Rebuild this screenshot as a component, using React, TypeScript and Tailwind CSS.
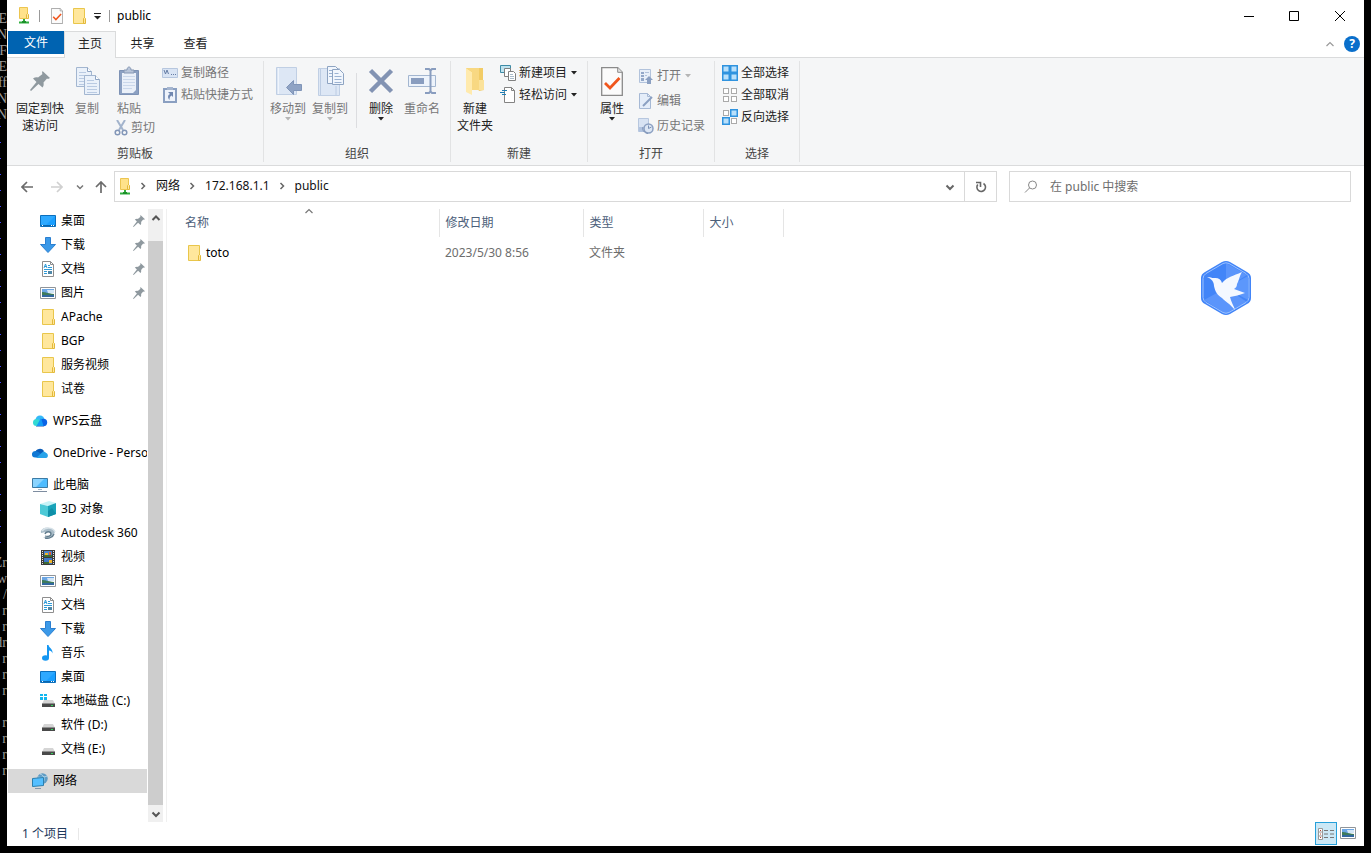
import type { ReactNode } from 'react';

function Svg({ w, h, children, className = '' }: { w: number; h: number; children: ReactNode; className?: string }) {
  return (
    <svg width={w} height={h} viewBox={`0 0 ${w} ${h}`} className={`shrink-0 ${className}`} aria-hidden="true">
      {children}
    </svg>
  );
}

/* ---------- small icons ---------- */

function FolderIcon() {
  return (
    <Svg w={16} h={16}>
      <path d="M2.500.500h11v15h-11z" fill="#ffe79c" stroke="#e9c64b" />
      <path d="M12.500 15.500v-5l1-1 1 1v5z" fill="#ffe79c" stroke="#e3b93a" />
    </Svg>
  );
}

function NetFolderIcon() {
  return (
    <Svg w={16} h={17}>
      <path d="M3.500.500h8v11h-8z" fill="#ffe28a" stroke="#ecc550" />
      <path d="M10.500 11.500v-4l1-1 1 1v4z" fill="#ffe9a8" stroke="#e3b93a" />
      <path d="M8 12v3" stroke="#2fae3c" strokeWidth="2" />
      <path d="M3 15.500h10" stroke="#2fae3c" strokeWidth="2" />
      <path d="M6 15h4" stroke="#1c8f2a" strokeWidth="2" />
    </Svg>
  );
}

function DesktopIcon() {
  return (
    <Svg w={16} h={16}>
      <path d="M.5 2.500h15v11H.5z" fill="#1a9fff" stroke="#0b6fbd" />
      <path d="M1 3h14L5 13H1z" fill="#3cb0ff" opacity=".6" />
      <path d="M1 12.500h14" stroke="#0a66ad" />
      <path d="M2 12.500h1M11 12.500h1M13 12.500h1" stroke="#fff" />
    </Svg>
  );
}

function DownloadIcon() {
  return (
    <Svg w={16} h={16}>
      <path d="M5.500.500h5v7h5l-7.500 8-7.500-8h5z" fill="#3b99e8" stroke="#2b7fd0" />
    </Svg>
  );
}

function DocumentIcon() {
  return (
    <Svg w={16} h={16}>
      <path d="M2.500.500h8l3 3v12h-11z" fill="#fff" stroke="#8e8e8e" />
      <path d="M10.500.500v3h3" fill="none" stroke="#8e8e8e" />
      <path d="M4 7l1.500-4L7 7M4.500 5.500h2M8 4.500h2M8 6.500h4M4 8.500h8M4 10.500h3M4 12.500h3" fill="none" stroke="#2f9bd8" />
      <path d="M8 10h4v3H8z" fill="#4f88a8" />
    </Svg>
  );
}

function PictureIcon() {
  return (
    <Svg w={16} h={16}>
      <path d="M.5 2.500h15v11H.5z" fill="#fff" stroke="#8f9499" />
      <path d="M2 4h12v4H2z" fill="#6ba6e4" />
      <path d="M7 5h7v3H8z" fill="#d3e6f7" />
      <path d="M2 7c3 0 5 1 12 2v1H2z" fill="#3d7a5d" />
      <path d="M2 10h12v2H2z" fill="#32689f" />
    </Svg>
  );
}

function WpsIcon() {
  return (
    <Svg w={16} h={16}>
      <circle cx="8" cy="7" r="4.500" fill="#35b8f8" />
      <circle cx="11.500" cy="9.500" r="3.700" fill="#0b63e5" />
      <circle cx="4.500" cy="9.500" r="3.500" fill="#32d9d4" />
      <path d="M4.500 13L9 5l2.500 8z" fill="#129af5" />
      <path d="M4 13.500h8" stroke="#91a9d5" />
    </Svg>
  );
}

function OneDriveIcon() {
  return (
    <Svg w={16} h={16}>
      <path d="M3 8a5 5 0 019-2l-3 5H2z" fill="#0a5cb8" />
      <path d="M3 12.500a3.200 3.200 0 01.3-6.400c2 0 3 1 6 3.400l-2 3z" fill="#1078d4" />
      <path d="M4 13l6-5.500c1-1 3-1.500 4 .5 2.500.5 2.500 5 0 5z" fill="#28a3ea" />
    </Svg>
  );
}

function ComputerIcon() {
  return (
    <Svg w={16} h={16}>
      <path d="M.5 1.500h15v9H.5z" fill="#4ebcff" stroke="#3c7ba5" />
      <path d="M1 2h11L4 10H1z" fill="#8ad4ff" />
      <path d="M6 12.500h4" stroke="#9db7c9" />
      <path d="M1 14.500h14" stroke="#7e8da0" />
    </Svg>
  );
}

function CubeIcon() {
  return (
    <Svg w={16} h={16}>
      <path d="M0 3l9-3 7 2-7 3z" fill="#c7f3f7" />
      <path d="M0 3l8 2v11l-8-3z" fill="#4cc9d6" />
      <path d="M8 5l8-3v11l-8 3z" fill="#17a3b9" />
      <path d="M8 10l4-3 4 6-8 3z" fill="#0f8fa8" />
    </Svg>
  );
}

function AutodeskIcon() {
  return (
    <Svg w={16} h={16}>
      <path d="M1 8c-1-4 4-6 8-5 5 0 7 4 5 6-2 4-8 5-11 3 3 0 7 0 8-3 0-3-3-3-5-2-2 0-3 1-5 1z" fill="#a9bcc8" />
      <path d="M2 6c3-4 11-4 13 1" fill="none" stroke="#d7e2e8" strokeWidth="1.500" />
      <path d="M5 9c1-3 6-3 6 0 0 2-3 3-6 2M5 13c4 1 8-1 9-4" fill="none" stroke="#607b8c" strokeWidth="1.300" />
    </Svg>
  );
}

function VideoIcon() {
  return (
    <Svg w={16} h={16}>
      <path d="M1 1h14v15H1z" fill="#3b3b3b" />
      <path d="M2.500 2v14M13.500 2v14" stroke="#e6e6e6" strokeDasharray="1 1" />
      <path d="M4 2h8v6H4z" fill="#4b83cf" />
      <path d="M4 9h8v6H4z" fill="#3d78c8" />
      <path d="M5 4h3v2H5zM9 11h3v3H9z" fill="#f0b72c" />
      <path d="M9 3h2v3H9z" fill="#d85a32" />
      <path d="M4 6h8v2H4zM4 13h5v2H4z" fill="#3c6b35" />
    </Svg>
  );
}

function MusicIcon() {
  return (
    <Svg w={16} h={16}>
      <ellipse cx="5.500" cy="13" rx="3.500" ry="2.700" fill="#1597f2" />
      <path d="M7 13V0h1.500c.5 3 4.500 3.500 4 8.500-.5-2-2-3-3.500-3V13z" fill="#1597f2" />
    </Svg>
  );
}

function DiskIcon({ system = false }: { system?: boolean }) {
  return (
    <Svg w={16} h={16}>
      {system && <path d="M0 1h3v2H0zM4 1h3v2H4zM0 4h3v3H0zM4 4h3v3H4z" fill="#12b7f0" />}
      <path d="M4 7h9l2 4H2z" fill="#d5d5d5" />
      <path d="M2 10.500h13V14H2z" fill="#494949" />
      <path d="M11 12.500h2" stroke="#35d45c" />
    </Svg>
  );
}

function NetworkIcon() {
  return (
    <Svg w={16} h={16}>
      <circle cx="10.500" cy="5.500" r="5.200" fill="#5f9cc4" />
      <path d="M8 1c4 1 5 5 3 9M6 4c3 1 7 0 9-1" fill="none" stroke="#b5d8ec" />
      <path d="M.5 5.500l11-1v8l-11 1z" fill="#55bfff" stroke="#2b7fae" />
      <path d="M3 15.500h6" stroke="#8496a8" />
    </Svg>
  );
}

function PinIcon({ size = 12 }: { size?: number }) {
  return (
    <svg width={size} height={size} viewBox="0 0 20 20" className="shrink-0" aria-hidden="true">
      <path d="M12.500 0L20 7l-2 1-1-.5-3.500 4c.5 2 0 4-1 5L8.500 13 1 20l-1-1 6.500-8L3 7.500c1.500-1 3.500-1.500 5-1L12.500 3 12 2z" fill="#8f999f" />
    </svg>
  );
}

function Caret({ color = '#222' }: { color?: string }) {
  return (
    <Svg w={6} h={4}>
      <path d="M0 0h6L3 3.500z" fill={color} />
    </Svg>
  );
}

function Chevron({ d, color = '#666', width = 1.5 }: { d: string; color?: string; width?: number }) {
  return (
    <Svg w={10} h={10}>
      <path d={d} fill="none" stroke={color} strokeWidth={width} />
    </Svg>
  );
}

const right = 'M3.500 2l3 3-3 3';
const down = 'M1.500 3.500L5 7l3.500-3.500';
const up = 'M1.500 7L5 3.500 8.500 7';

/* ---------- ribbon icons ---------- */

function Page({ x, y }: { x: number; y: number }) {
  return (
    <g transform={`translate(${x} ${y})`}>
      <path d="M.5.500h11l4 4v15H.5z" fill="#eaf1fa" stroke="#a3b6d0" />
      <path d="M11.500.500v4h4" fill="#fff" stroke="#8ea4c2" />
      <path d="M3 5.500h7M3 8.500h10M3 11.500h10M3 14.500h10M3 17.500h10" stroke="#b9cae2" />
    </g>
  );
}

function CopyBigIcon() {
  return (
    <Svg w={26} h={30}>
      <Page x={2} y={1} />
      <Page x={10} y={9} />
    </Svg>
  );
}

function PasteBigIcon() {
  return (
    <Svg w={22} h={30}>
      <path d="M1.500 4.500h19v24h-19z" fill="#8ba0c2" stroke="#7d92b5" />
      <path d="M4 7h14v17l-3 3H4z" fill="#eaf0f9" />
      <path d="M5 10.500h12M5 13.500h12M5 16.500h12M5 19.500h12M5 22.500h9" stroke="#cbd8eb" />
      <path d="M6 4h3c0-4 4-4 4 0h3v3H6z" fill="#b7c4d9" stroke="#8496b3" />
    </Svg>
  );
}

function MoveIcon() {
  return (
    <Svg w={28} h={30}>
      <path d="M2.500 1.500h20v27h-20z" fill="#dde7f5" stroke="#c0cfe4" />
      <path d="M4.500 2v26" stroke="#f0f5fc" />
      <path d="M12.500 21.500l7-7v4h8v6h-8v4z" fill="#8fa3c4" stroke="#8095b8" />
    </Svg>
  );
}

function CopyToIcon() {
  return (
    <Svg w={28} h={32}>
      <path d="M2.500 3.500h21v27h-21z" fill="#dde7f5" stroke="#c0cfe4" />
      <path d="M4.500 4v26M20 21v9" stroke="#bccce3" />
      <path d="M11.500 1.500h8l3 3v14h-11z" fill="#f1f6fd" stroke="#8ea4c2" />
      <path d="M16.500 4.500h7l4 4v11h-11z" fill="#f1f6fd" stroke="#8ea4c2" />
      <path d="M13 5.500h3M13 8.500h3M13 11.500h3M18.500 8.500h4M18.500 11.500h7M18.500 14.500h7M18.500 17.500h7" stroke="#9bb2d2" />
    </Svg>
  );
}

function DeleteIcon() {
  return (
    <Svg w={26} h={26}>
      <path d="M2.500 2.500l21 21M23.500 2.500l-21 21" stroke="#8293b3" strokeWidth="4.500" />
    </Svg>
  );
}

function RenameIcon() {
  return (
    <Svg w={30} h={28}>
      <path d="M1.500 8.500h27v11h-27z" fill="#edf3fb" stroke="#a3b6d0" />
      <path d="M4 11h13v6H4z" fill="#899dbf" />
      <path d="M18 2h4l1.500 1.500L25 2h4M18 26h4l1.500-1.500L25 26h4M23.500 3v22" fill="none" stroke="#899dbf" strokeWidth="2" />
    </Svg>
  );
}

function NewFolderIcon() {
  return (
    <Svg w={20} h={30}>
      <path d="M1 2h17v21l1 1-5 1z" fill="#f2cc66" />
      <path d="M14 14h5v10h-5z" fill="#fbe29a" />
      <path d="M1 2l6 4v23l-6-3z" fill="#ffeaad" />
      <path d="M1 2h13v22H7V6z" fill="#f8d882" />
    </Svg>
  );
}

function CheckPage({ w, h }: { w: number; h: number }) {
  return (
    <svg width={w} height={h} viewBox="0 0 22 29" className="shrink-0" aria-hidden="true">
      <path d="M.7.700h16l4.600 4.600v23H.7z" fill="#fbfbfb" stroke="#8a8a8a" strokeWidth="1.300" />
      <path d="M16.700.700v4.600h4.600" fill="#e4e4e4" stroke="#8a8a8a" />
      <path d="M4 16l5 5 9.500-10" fill="none" stroke="#f0561d" strokeWidth="2.800" />
    </svg>
  );
}

function CutIcon() {
  return (
    <Svg w={14} h={16}>
      <path d="M3 0l6 10M11 0L5 10" stroke="#a2b3cc" strokeWidth="2" />
      <circle cx="3.500" cy="12.500" r="2.300" fill="none" stroke="#8296b8" strokeWidth="1.500" />
      <circle cx="10.500" cy="12.500" r="2.300" fill="none" stroke="#8296b8" strokeWidth="1.500" />
    </Svg>
  );
}

function CopyPathIcon() {
  return (
    <Svg w={16} h={16}>
      <path d="M.5 3.500h15v9H.5z" fill="#d9e4f4" stroke="#b6c6de" />
      <path d="M2 5l1.500 4L5 5l1.500 4M9 9.500h1M11 9.500h1M13 9.500h1" fill="none" stroke="#667da5" />
    </Svg>
  );
}

function ShortcutIcon() {
  return (
    <Svg w={16} h={16}>
      <path d="M2 2h12v13H2z" fill="#eef3fb" stroke="#8a9fc1" strokeWidth="2" />
      <path d="M5 0h6v3H5z" fill="#a5b5cf" />
      <path d="M6 5h5v5L9.500 8.500C8 9 7.500 11 7.500 13 5.500 11 5.500 8 8 7z" fill="#7087b0" />
    </Svg>
  );
}

function NewItemIcon() {
  return (
    <Svg w={16} h={16}>
      <path d="M.5.500h10v7H.5z" fill="#bfe3ef" stroke="#3d8ba6" />
      <path d="M4.500 3.500h6v8h-6z" fill="#fff" stroke="#808080" />
      <path d="M8.500 6.500h5l2 2v7h-7z" fill="#fff" stroke="#808080" />
      <path d="M10 9.500h3M10 11.500h4M10 13.500h4" stroke="#a9bccb" />
    </Svg>
  );
}

function EasyAccessIcon() {
  return (
    <Svg w={16} h={16}>
      <path d="M4.500.500h7l3 3v12h-10z" fill="#fff" stroke="#838383" />
      <path d="M11.500.500v3h3" fill="none" stroke="#838383" />
      <path d="M2 3.500h5M0 5.500h5M2 7.500h4" stroke="#1f7fb5" />
    </Svg>
  );
}

function OpenIcon() {
  return (
    <Svg w={16} h={16}>
      <path d="M1.500 1.500h11v13h-11z" fill="#e8eff9" stroke="#b2c3dc" />
      <path d="M3 4h3v2H3zM3 7h3v2H3zM3 10h3v3H3z" fill="#93a8c9" />
      <path d="M7 4.500h4M7 7.500h2" stroke="#b2c3dc" />
      <path d="M7 12l4-4 4 4h-2v4H9v-4z" fill="#8ba0c2" />
    </Svg>
  );
}

function EditIcon() {
  return (
    <Svg w={16} h={16}>
      <path d="M1.500.500h8l3 3v12h-11z" fill="#e4edf9" stroke="#a6b9d5" />
      <path d="M9.500.500v3h3" fill="none" stroke="#a6b9d5" />
      <path d="M5 13l9-9" stroke="#8ba0c2" strokeWidth="2" />
    </Svg>
  );
}

function HistoryIcon() {
  return (
    <Svg w={16} h={16}>
      <path d="M.5.500h10v13H.5z" fill="#d8e3f3" stroke="#b7c7df" />
      <path d="M1 9h4v5H1z" fill="#b1c3df" />
      <circle cx="10.500" cy="10.500" r="4.500" fill="#dce6f4" stroke="#8ba0c2" strokeWidth="1.500" />
      <path d="M10.500 7.500v3l3-1.500M5 9c-1 3 1 6 5 6.500" fill="none" stroke="#7c92b6" />
    </Svg>
  );
}

function SelectIcon({ on }: { on: boolean[] }) {
  // selected cells are larger and blue, the rest are small gray outlines
  return (
    <Svg w={16} h={16}>
      {on.map((isOn, i) => {
        const x = (i % 2) * 8;
        const y = Math.floor(i / 2) * 8;
        return isOn ? (
          <rect key={i} x={x + 0.75} y={y + 0.75} width="6.500" height="6.500" fill="#b9e0fb" stroke="#2f93df" strokeWidth="1.500" />
        ) : (
          <rect key={i} x={x + 1.5} y={y + 1.5} width="5" height="5" fill="#fff" stroke="#aaa" />
        );
      })}
    </Svg>
  );
}

/* ---------- ribbon parts ---------- */

function Group({ label, children }: { label: string; children: ReactNode }) {
  return (
    <section className="my-[3px] flex flex-col justify-between border-r border-[#e2e3e4]">
      <div className="flex items-start">{children}</div>
      <h2 className="text-center leading-4 text-[#444]">{label}</h2>
    </section>
  );
}

type BigProps = { icon: ReactNode; lines: string[]; off?: boolean; caret?: boolean; className?: string };

function BigButton({ icon, lines, off, caret, className = '' }: BigProps) {
  return (
    <button className={`mt-1 flex flex-col items-center ${off ? 'text-[#777]' : 'text-[#222]'} ${className}`}>
      <span className="mb-[3px] flex h-8 items-center">{icon}</span>
      {lines.map((line) => (
        <span key={line} className="leading-[17px] whitespace-nowrap">{line}</span>
      ))}
      {caret && <Caret color={off ? '#b5b5b5' : '#222'} />}
    </button>
  );
}

type SmallProps = { icon: ReactNode; text: string; off?: boolean; caret?: boolean; tall?: boolean };

function SmallButton({ icon, text, off, caret, tall }: SmallProps) {
  return (
    <button className={`flex items-center gap-[3px] whitespace-nowrap ${tall ? 'h-[25px]' : 'h-[22px]'} ${off ? 'text-[#777]' : 'text-[#222]'}`}>
      {icon}
      {text}
      {caret && <span className="pl-px"><Caret color={off ? '#b5b5b5' : '#222'} /></span>}
    </button>
  );
}

function Ribbon() {
  return (
    <div className="flex h-[109px] border-y border-[#dadbdc] bg-[#f5f6f7]">
      <Group label="剪贴板">
        <BigButton icon={<PinIcon size={20} />} lines={['固定到快', '速访问']} className="ml-[9px] w-12" />
        <BigButton icon={<CopyBigIcon />} lines={['复制']} off className="ml-[10px] w-[26px]" />
        <div className="ml-[14px] w-[42px]">
          <BigButton icon={<PasteBigIcon />} lines={['粘贴']} off className="w-[30px]" />
          <SmallButton icon={<CutIcon />} text="剪切" off />
        </div>
        <div className="mt-px mr-[10px] ml-[6px]">
          <SmallButton icon={<CopyPathIcon />} text="复制路径" off />
          <SmallButton icon={<ShortcutIcon />} text="粘贴快捷方式" off />
        </div>
      </Group>
      <Group label="组织">
        <BigButton icon={<MoveIcon />} lines={['移动到']} off caret className="ml-[6px] w-9" />
        <BigButton icon={<CopyToIcon />} lines={['复制到']} off caret className="ml-[6px] w-9" />
        <div className="mt-3 ml-2 h-[55px] w-px bg-[#dcdde0]" />
        <BigButton icon={<DeleteIcon />} lines={['删除']} caret className="ml-[10px] w-7" />
        <BigButton icon={<RenameIcon />} lines={['重命名']} off className="mr-[10px] ml-[9px] w-9" />
      </Group>
      <Group label="新建">
        <BigButton icon={<NewFolderIcon />} lines={['新建', '文件夹']} className="ml-[6px] w-9" />
        <div className="mt-px mr-[10px] ml-[7px]">
          <SmallButton icon={<NewItemIcon />} text="新建项目" caret />
          <SmallButton icon={<EasyAccessIcon />} text="轻松访问" caret />
        </div>
      </Group>
      <Group label="打开">
        <BigButton icon={<CheckPage w={22} h={29} />} lines={['属性']} caret className="ml-[10px] w-7" />
        <div className="mt-[2px] mr-[9px] ml-3">
          <SmallButton icon={<OpenIcon />} text="打开" off caret tall />
          <SmallButton icon={<EditIcon />} text="编辑" off tall />
          <SmallButton icon={<HistoryIcon />} text="历史记录" off tall />
        </div>
      </Group>
      <Group label="选择">
        <div className="mt-px mr-[10px] ml-[7px]">
          <SmallButton icon={<SelectIcon on={[true, true, true, true]} />} text="全部选择" />
          <SmallButton icon={<SelectIcon on={[false, false, false, false]} />} text="全部取消" />
          <SmallButton icon={<SelectIcon on={[false, true, true, false]} />} text="反向选择" />
        </div>
      </Group>
    </div>
  );
}

/* ---------- window ---------- */

function TitleBar() {
  return (
    <header className="flex h-[31px] items-center text-black">
      <span className="ml-[9px]"><NetFolderIcon /></span>
      <span className="ml-[7px] h-3 w-px bg-[#999]" />
      <button className="ml-[11px]" aria-label="属性"><CheckPage w={12} h={16} /></button>
      <button className="ml-2" aria-label="新建文件夹"><FolderIcon /></button>
      <button className="ml-[7px]" aria-label="自定义快速访问工具栏">
        <Svg w={7} h={8}>
          <path d="M0 1.500h7" stroke="#222" />
          <path d="M0 4h7L3.500 7.500z" fill="#222" />
        </Svg>
      </button>
      <span className="ml-2 h-3 w-px bg-[#999]" />
      <h1 className="ml-[7px] flex-1">public</h1>
      <button className="flex w-[45px] justify-center" aria-label="最小化">
        <Svg w={10} h={10}><path d="M0 5.500h10" stroke="#000" /></Svg>
      </button>
      <button className="flex w-[45px] justify-center" aria-label="最大化">
        <Svg w={10} h={10}><path d="M.5.500h9v9h-9z" fill="none" stroke="#000" /></Svg>
      </button>
      <button className="flex w-12 justify-center" aria-label="关闭">
        <Svg w={10} h={10}><path d="M0 0l10 10M10 0L0 10" stroke="#000" /></Svg>
      </button>
    </header>
  );
}

function Tabs() {
  return (
    <nav className="flex h-[26px] text-[#222]">
      <button className="ml-px h-[23px] w-14 bg-[#0063b1] text-white">文件</button>
      <button className="relative h-[27px] w-[52px] border border-b-0 border-[#dadbdc] bg-[#f5f6f7] pb-[2px]">主页</button>
      <button className="w-[53px] pb-px">共享</button>
      <button className="w-[53px] pb-px">查看</button>
      <div className="ml-auto flex items-center gap-[9px] pr-1">
        <button aria-label="折叠功能区"><Chevron d={up} color="#9a9a9a" width={1.2} /></button>
        <button className="flex size-4 items-center justify-center rounded-full bg-[#0a6fcb] font-bold text-white" aria-label="帮助">?</button>
      </div>
    </nav>
  );
}

function AddressRow() {
  return (
    <div className="mt-[5px] mr-[13px] mb-[7px] flex h-[31px] shrink-0 items-center">
      <button className="ml-[14px]" aria-label="后退">
        <Svg w={12} h={12}><path d="M12 6H1M6 1L1 6l5 5" fill="none" stroke="#6b6b6b" strokeWidth="1.700" /></Svg>
      </button>
      <button className="ml-[18px]" aria-label="前进">
        <Svg w={12} h={12}><path d="M0 6h11M6 1l5 5-5 5" fill="none" stroke="#d0d0d0" strokeWidth="1.700" /></Svg>
      </button>
      <button className="ml-3" aria-label="最近浏览的位置"><Chevron d="M2 3.500l3 3 3-3" color="#777" /></button>
      <button className="ml-[10px]" aria-label="上移">
        <Svg w={12} h={12}><path d="M6 12V1M1 6l5-5 5 5" fill="none" stroke="#6b6b6b" strokeWidth="1.700" /></Svg>
      </button>
      <div className="ml-[7px] flex h-full flex-1 items-center border border-[#d9d9d9] text-[#111]">
        <span className="ml-[2px]"><NetFolderIcon /></span>
        <span className="ml-[5px] flex items-center pb-px">
          <Chevron d={right} />
          <a href="#network" className="mr-[7px] ml-2">网络</a>
          <Chevron d={right} />
          <a href="#host" className="mr-[7px] ml-2">172.168.1.1</a>
          <Chevron d={right} />
          <a href="#public" className="ml-2">public</a>
        </span>
        <button className="mr-[9px] ml-auto" aria-label="以前的位置"><Chevron d={down} width={2} /></button>
        <button className="flex h-full w-8 items-center justify-center border-l border-[#d9d9d9]" aria-label="刷新">
          <Svg w={12} h={12}>
            <path d="M8.500 2.500A4.300 4.300 0 112.800 3.500" fill="none" stroke="#666" strokeWidth="1.600" />
            <path d="M1 1.500h4.500V6" fill="none" stroke="#666" strokeWidth="1.600" />
          </Svg>
        </button>
      </div>
      <label className="ml-3 flex h-full w-[342px] items-center border border-[#d9d9d9]">
        <Svg w={14} h={14} className="mr-3 ml-[14px]">
          <circle cx="8.500" cy="5" r="4" fill="none" stroke="#888" />
          <path d="M5.500 8L1 12.500" stroke="#888" />
        </Svg>
        <input aria-label="搜索" placeholder="在 public 中搜索" className="w-full bg-transparent outline-none placeholder:text-[#6d6d6d]" />
      </label>
    </div>
  );
}

type Item = { text: string; icon: ReactNode; pinned?: boolean };

const quick: Item[] = [
  { text: '桌面', icon: <DesktopIcon />, pinned: true },
  { text: '下载', icon: <DownloadIcon />, pinned: true },
  { text: '文档', icon: <DocumentIcon />, pinned: true },
  { text: '图片', icon: <PictureIcon />, pinned: true },
  { text: 'APache', icon: <FolderIcon /> },
  { text: 'BGP', icon: <FolderIcon /> },
  { text: '服务视频', icon: <FolderIcon /> },
  { text: '试卷', icon: <FolderIcon /> },
];

const computer: Item[] = [
  { text: '3D 对象', icon: <CubeIcon /> },
  { text: 'Autodesk 360', icon: <AutodeskIcon /> },
  { text: '视频', icon: <VideoIcon /> },
  { text: '图片', icon: <PictureIcon /> },
  { text: '文档', icon: <DocumentIcon /> },
  { text: '下载', icon: <DownloadIcon /> },
  { text: '音乐', icon: <MusicIcon /> },
  { text: '桌面', icon: <DesktopIcon /> },
  { text: '本地磁盘 (C:)', icon: <DiskIcon system /> },
  { text: '软件 (D:)', icon: <DiskIcon /> },
  { text: '文档 (E:)', icon: <DiskIcon /> },
];

function TreeRow({ item, root, active }: { item: Item; root?: boolean; active?: boolean }) {
  return (
    <li className={`ml-px flex h-6 items-center gap-[5px] pr-[2px] whitespace-nowrap ${root ? 'pl-6' : 'pl-8'} ${active ? 'bg-[#d9d9d9]' : ''}`}>
      {item.icon}
      <a href="#" className="flex-1">{item.text}</a>
      {item.pinned && <PinIcon />}
    </li>
  );
}

function Sidebar() {
  return (
    <aside className="flex w-40 shrink-0 border-r border-[#f0f0f0] text-black">
      <div className="w-[140px] space-y-2 overflow-hidden">
        <ul>{quick.map((item, i) => <TreeRow key={i} item={item} />)}</ul>
        <ul><TreeRow item={{ text: 'WPS云盘', icon: <WpsIcon /> }} root /></ul>
        <ul><TreeRow item={{ text: 'OneDrive - Personal', icon: <OneDriveIcon /> }} root /></ul>
        <ul>
          <TreeRow item={{ text: '此电脑', icon: <ComputerIcon /> }} root />
          {computer.map((item, i) => <TreeRow key={i} item={item} />)}
        </ul>
        <ul><TreeRow item={{ text: '网络', icon: <NetworkIcon /> }} root active /></ul>
      </div>
      <div className="ml-px flex w-[15px] flex-col bg-[#f0f0f0]">
        <button className="flex h-8 justify-center pt-1" aria-label="向上滚动"><Chevron d={up} color="#555" width={2} /></button>
        <div className="flex-1 bg-[#cdcdcd]" />
        <button className="flex h-[17px] items-center justify-center" aria-label="向下滚动"><Chevron d={down} color="#555" width={2} /></button>
      </div>
    </aside>
  );
}

function BirdBadge() {
  return (
    <svg width="52" height="56" viewBox="0 0 52 56" className="absolute top-[51px] right-28" role="img" aria-label="迅雷">
      <path d="M22 2q4-2 8 0l17 10q4 2 4 6v20q0 4-4 6L30 54q-4 2-8 0L5 44q-4-2-4-6V18q0-4 4-6z" fill="#4285f8" />
      <path d="M26 3l21 12-21 13z" fill="#5b95fb" />
      <path d="M48 16v24L26 28z" fill="#5c97fc" />
      <path d="M4 40l22-12 21 14-21 12z" fill="#5b95fb" />
      <path d="M23 3.500q3-1.500 6 0l17 10q3 2 3 5v19q0 3-3 5L29 52.500q-3 1.500-6 0L6 42.500q-3-2-3-5v-19q0-3 3-5z" fill="none" stroke="#9cc2ff" />
      <path d="M7 17c3-.5 4 1 7 1 4-.5 7 1 8 5 5-6 11-7 20-11-3 5-3 9-5 12 0 2-1 4-3 5l11 4c-5 2-10 3-15 4 1 5 4 9 5 13-5-6-9-8-13-12-5-3-7-7-8-12 0-4-2-7-7-9z" fill="#f4f8ff" />
    </svg>
  );
}

function FileTable() {
  const th = 'h-7 border-r border-[#e5e5e5] pl-[6px] text-left font-normal text-[#4c607a]';
  return (
    <main className="relative min-w-0 flex-1">
      <table className="ml-3 table-fixed">
        <thead>
          <tr>
            <th className={`${th} relative w-[260px]`}>
              名称
              <span className="absolute -top-[3px] left-1/2 -translate-x-1/2"><Chevron d={up} color="#777" width={1.2} /></span>
            </th>
            <th className={`${th} w-36`}>修改日期</th>
            <th className={`${th} w-30`}>类型</th>
            <th className={`${th} w-20`}>大小</th>
          </tr>
        </thead>
        <tbody>
          <tr className="h-8 text-[#6d6d6d]">
            <td className="pl-[7px] text-black">
              <span className="flex items-center gap-[4px]"><FolderIcon />toto</span>
            </td>
            <td className="pl-[6px]">2023/5/30 8:56</td>
            <td className="pl-[6px]">文件夹</td>
            <td />
          </tr>
        </tbody>
      </table>
      <BirdBadge />
    </main>
  );
}

function StatusBar() {
  return (
    <footer className="flex h-6 shrink-0 items-center text-[#1e395b]">
      <span className="ml-[15px] border-r border-[#e8e8e8] pr-[10px] leading-3">1 个项目</span>
      <button className="ml-auto flex h-[23px] w-[22px] items-center justify-center self-start border border-[#26a0da] bg-[#cbe8f6]" aria-label="详细信息">
        <Svg w={16} h={14}>
          <path d="M.5 1.500h4v11h-4zM0 5h5M0 9h5" fill="#fff" stroke="#999" />
          <path d="M2 3.500h1M2 7h1M2 10.500h1" stroke="#b04a3a" />
          <path d="M6 3.500h4M12 3.500h4M6 7h4M12 7h4M6 10.500h4M12 10.500h4" stroke="#777" />
        </Svg>
      </button>
      <button className="mr-2 ml-[3px] pb-[3px]" aria-label="大缩略图"><PictureIcon /></button>
    </footer>
  );
}

const consoleLines = [
  'E', 'N', 'F', 'E', 'ff', 'N', 'N',
  ...Array(27).fill('~'),
  'Zr', 'w', '/', 'r', 'r', 'dr', 'r', 'r', 'r', '', 'r', 'r', 'r', 'r',
];

function ConsoleEdge() {
  return (
    <div className="w-[7px] shrink-0 overflow-hidden pt-[11px] font-['Liberation_Serif',serif] text-sm leading-4 text-[#9a9a9a]">
      {consoleLines.map((line, i) =>
        line === '~' ? (
          <div key={i} className="h-4 pt-[3px]"><div className="h-px w-px bg-[#4646ff]" /></div>
        ) : (
          <div key={i} className="flex h-4 justify-end">{line}</div>
        ),
      )}
    </div>
  );
}

export default function App() {
  return (
    <div className="flex h-screen bg-black pr-[7px] pb-[7px] font-['Noto_Sans','Noto_Sans_CJK_SC',sans-serif] text-xs">
      <ConsoleEdge />
      <div className="flex min-w-0 flex-1 flex-col bg-white">
        <TitleBar />
        <Tabs />
        <Ribbon />
        <AddressRow />
        <div className="flex min-h-0 flex-1">
          <Sidebar />
          <FileTable />
        </div>
        <StatusBar />
      </div>
    </div>
  );
}
